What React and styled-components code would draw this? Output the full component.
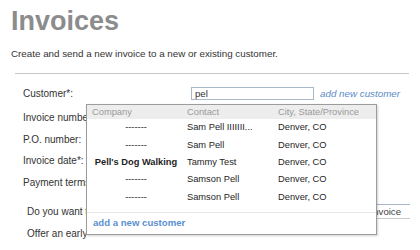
import React from "react";
import styled, { createGlobalStyle } from "styled-components";

const Global = createGlobalStyle`
  html, body { margin: 0; padding: 0; background: #fff; }
  body { font-family: "Liberation Sans", Arial, sans-serif; color: #333; }
  * { box-sizing: border-box; }
`;

const Page = styled.div`
  position: relative;
  width: 420px;
  height: 250px;
  overflow: hidden;
  padding: 8px 11px 0 11px;
`;

const Title = styled.h1`
  margin: 0;
  font-size: 27px;
  line-height: 27px;
  font-weight: bold;
  color: #8c8c8c;
`;

const Subtitle = styled.p`
  margin: 13px 0 0 0;
  font-size: 9.8px;
  line-height: 12px;
  color: #333;
`;

const Rule = styled.div`
  margin: 13px 0 0 4px;
  height: 1px;
  background: #c8c8c8;
`;

const Form = styled.div`
  margin: 9px 0 0 12px;
  display: flex;
  flex-direction: column;
`;

const Row = styled.div`
  display: flex;
  align-items: center;
  flex: none;
  height: ${(p) => p.$h || 21.5}px;
  margin-top: ${(p) => p.$mt || 0}px;
  padding-left: ${(p) => p.$indent || 0}px;
  font-size: 10px;
  line-height: 11px;
  color: #333;
  white-space: nowrap;
`;

const Label = styled.div`
  width: 168px;
  flex: none;
`;

const Input = styled.div`
  width: 123px;
  height: 13px;
  border: 1px solid #a9b8c8;
  font-size: 9.6px;
  line-height: 11px;
  padding-left: 3px;
  color: #333;
`;

const AddLink = styled.span`
  margin-left: 6px;
  font-style: italic;
  color: #5b8bc9;
  font-size: 9.8px;
`;

const Spacer = styled.div`
  flex: 1;
`;

const ChoiceBox = styled.div`
  width: 80px;
  height: 15px;
  margin-right: -1px;
  border-top: 1px solid #a7b7c9;
  border-bottom: 1px solid #c9c9c9;
  font-size: 9.6px;
  line-height: 13px;
  text-align: right;
  padding-right: 9px;
  color: #444;
`;

const Dropdown = styled.div`
  position: absolute;
  left: 86px;
  top: 104px;
  width: 291px;
  background: #fff;
  border: 1px solid #9c9c9c;
  box-shadow: 1px 1px 2px rgba(0, 0, 0, 0.18);
  display: flex;
  flex-direction: column;
  z-index: 2;
`;

const Grid = styled.div`
  flex: none;
  display: grid;
  grid-template-columns: 100px 91px 1fr;
  align-items: center;
  height: ${(p) => p.$h}px;
  background: ${(p) => p.$bg || "transparent"};
  color: ${(p) => p.$color || "#1e1e1e"};
  font-size: 9.3px;
  line-height: 11px;
  white-space: nowrap;
`;

const HeadCell = styled.div`
  padding-left: ${(p) => p.$pl || 0}px;
`;

const CompanyCell = styled.div`
  text-align: center;
  padding-right: 2px;
  font-weight: ${(p) => (p.$bold ? "bold" : "normal")};
`;

const Cell = styled.div``;

const Footer = styled.div`
  flex: none;
  height: 22px;
  margin-top: 6px;
  border-top: 1px solid #e6e6e6;
  padding: 4px 0 0 6px;
  font-size: 9.6px;
  line-height: 12px;
  font-weight: bold;
  color: #5b8fcf;
`;

const rows = [
  { company: "-------", contact: "Sam Pell IIIIIII...", city: "Denver, CO" },
  { company: "-------", contact: "Sam Pell", city: "Denver, CO" },
  { company: "Pell's Dog Walking", contact: "Tammy Test", city: "Denver, CO", bold: true },
  { company: "-------", contact: "Samson Pell", city: "Denver, CO" },
  { company: "-------", contact: "Samson Pell", city: "Denver, CO" },
];

export default function App() {
  return (
    <>
      <Global />
      <Page>
        <Title>Invoices</Title>
        <Subtitle>Create and send a new invoice to a new or existing customer.</Subtitle>
        <Rule />
        <Form>
          <Row $h={21}>
            <Label>Customer*:</Label>
            <Input>pel</Input>
            <AddLink>add new customer</AddLink>
          </Row>
          <Row $mt={3}>
            <Label>Invoice number:</Label>
          </Row>
          <Row>
            <Label>P.O. number:</Label>
          </Row>
          <Row>
            <Label>Invoice date*:</Label>
          </Row>
          <Row>
            <Label>Payment terms:</Label>
          </Row>
          <Row $h={22} $mt={7} $indent={4}>
            <span>Do you want to send this invoice now?</span>
            <Spacer />
            <ChoiceBox>Send invoice</ChoiceBox>
          </Row>
          <Row $h={22} $indent={4}>
            <span>Offer an early</span>
          </Row>
        </Form>

        <Dropdown>
          <Grid $h={14} $bg="#ededed" $color="#9a9a9a">
            <HeadCell $pl={5}>Company</HeadCell>
            <HeadCell>Contact</HeadCell>
            <HeadCell>City, State/Province</HeadCell>
          </Grid>
          {rows.map((r, i) => (
            <Grid key={i} $h={17.4}>
              <CompanyCell $bold={r.bold}>{r.company}</CompanyCell>
              <Cell>{r.contact}</Cell>
              <Cell>{r.city}</Cell>
            </Grid>
          ))}
          <Footer>add a new customer</Footer>
        </Dropdown>
      </Page>
    </>
  );
}
